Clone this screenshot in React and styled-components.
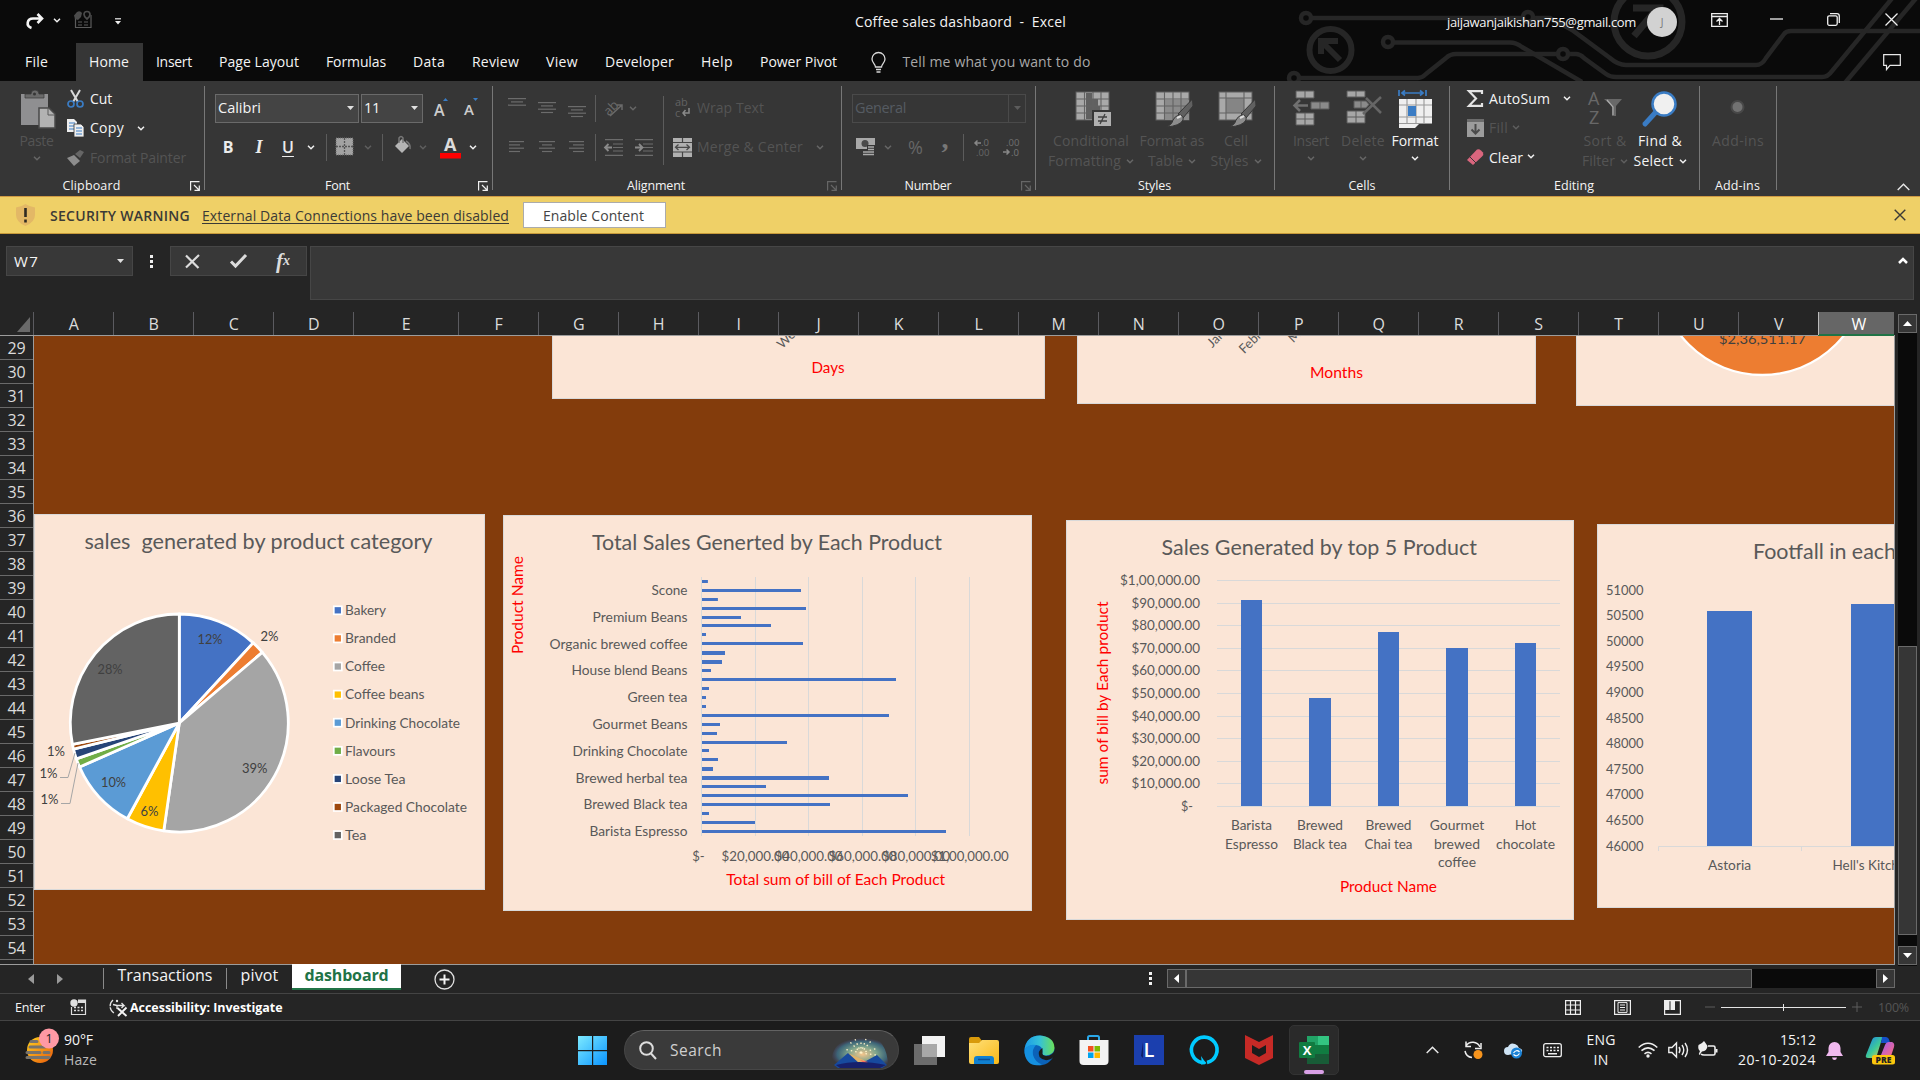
import React, { useLayoutEffect, useRef, useState } from "react";
import styled, { createGlobalStyle } from "styled-components";

const UI = `"Open Sans", "Noto Sans", sans-serif`;
const CH = `Lato, "Open Sans", sans-serif`;

const Global = createGlobalStyle`
  * { box-sizing: border-box; }
  html, body { margin: 0; padding: 0; overflow: hidden; background: #252525; }
  svg { display: block; flex: none; overflow: visible; }
`;

/* ---------- shared parts ---------- */

const Label = styled.span`
  display: inline-block;
  flex: none;
  white-space: pre;
  font-family: ${UI};
  font-size: ${(p) => p.$size}px;
  font-weight: ${(p) => p.$weight || 400};
  line-height: 20px;
  color: ${(p) => p.$color || "#f4f4f4"};
  text-decoration: ${(p) => (p.$under ? "underline" : "none")};
  text-underline-offset: 2px;
`;

/* A label whose tracking is adjusted so that it fills the given width. */
function Txt({ w, size = 14, color, weight, under, children }) {
  const ref = useRef(null);
  const [track, setTrack] = useState(0);
  useLayoutEffect(() => {
    if (!w) return;
    const natural = ref.current.getBoundingClientRect().width;
    setTrack((w - natural) / String(children).length);
  }, []);
  return (
    <Label ref={ref} $size={size} $color={color} $weight={weight} $under={under} style={track ? { letterSpacing: `${track}px` } : undefined}>
      {children}
    </Label>
  );
}

const Icon = ({ w, h, box, children }) => (
  <svg width={w} height={h} viewBox={box || `0 0 ${w} ${h}`} fill="none">
    {children}
  </svg>
);

const Chevron = ({ c = "#f0f0f0", w = 8 }) => (
  <Icon w={w} h={5} box="0 0 8 5">
    <path d="M1 .8 4 3.8 7 .8" stroke={c} strokeWidth="1.5" />
  </Icon>
);

const Box = styled.div`
  display: flex;
  flex: none;
  align-items: center;
  justify-content: ${(p) => p.$j || "flex-start"};
  width: ${(p) => (p.$w ? `${p.$w}px` : "auto")};
  margin-left: ${(p) => p.$ml || 0}px;
  margin-top: ${(p) => p.$mt || 0}px;
`;

const Dim = "#545454";

/* ---------- title and tabs ---------- */

const Window = styled.div`
  width: 1920px;
  height: 1080px;
  display: flex;
  flex-direction: column;
  overflow: hidden;
  background: #252525;
`;

const Header = styled.header`
  position: relative;
  height: 81px;
  flex: none;
  overflow: hidden;
  background: #0a0a0a;
`;
const Circuit = styled.div`
  position: absolute;
  right: 0;
  top: 0;
`;
const TitleBar = styled.div`
  position: relative;
  height: 43px;
  display: flex;
  align-items: center;
`;
const Tabs = styled.nav`
  position: relative;
  height: 38px;
  display: flex;
  align-items: center;
  padding-left: 11.5px;
`;
const Tab = styled.div`
  height: 38px;
  display: flex;
  align-items: center;
  padding: 0 13.5px;
  background: ${(p) => (p.$on ? "#363636" : "transparent")};
  margin-left: ${(p) => p.$ml || 0}px;
`;
const Avatar = styled.div`
  width: 30px;
  height: 30px;
  border-radius: 50%;
  background: #d2d2d2;
  margin-left: 11px;
  display: flex;
  align-items: center;
  justify-content: center;
`;

function CircuitArt() {
  const s = "#262626";
  return (
    <Circuit>
      <svg width="640" height="81" viewBox="1280 0 640 81" fill="none" stroke={s} strokeWidth="4.5">
        <circle cx="1306" cy="18" r="5" />
        <path d="M1312 18H1522M1534 18H1550L1572 30 1610 58Q1618 65 1626 65H1756Q1762 65 1766 58L1784 34Q1786 31 1791 31H1920" />
        <circle cx="1528" cy="17" r="5" />
        <circle cx="1648" cy="22" r="34" strokeWidth="7" />
        <circle cx="1330.500" cy="50" r="21" strokeWidth="6" />
        <path d="M1340 60 1322 42M1321 54V41H1338" strokeWidth="6" />
        <path d="M1634 36 1656 10M1633 8H1660V28" strokeWidth="7" />
        <circle cx="1388" cy="42" r="5" />
        <path d="M1394 42.500H1510Q1516 42.500 1522 47L1582 82" />
        <circle cx="1294" cy="78" r="5" />
        <path d="M1300 78H1418Q1422 78 1426 74L1446 58Q1450 54 1456 54H1557M1569 54H1576Q1580 54 1584 58L1606 74Q1610 77 1616 77H1822Q1828 77 1832 71L1894 -4" />
        <circle cx="1563" cy="54" r="5" />
        <path d="M1844 84 1918 -4" />
      </svg>
    </Circuit>
  );
}

const tabNames = [
  ["Insert", 36], ["Page Layout", 80], ["Formulas", 60], ["Data", 32], ["Review", 47],
  ["View", 32], ["Developer", 69], ["Help", 32], ["Power Pivot", 77],
];

function Top() {
  return (
    <Header>
      <CircuitArt />
      <TitleBar>
        <Box $ml={26} $mt={-1}>
          <Icon w={18} h={16}>
            <path d="M5.500 15C-.5 13 1 5.500 7 5.500H15M11.500 1 16 5.500 11.500 10" stroke="#f4f4f4" strokeWidth="2.600" />
          </Icon>
        </Box>
        <Box $ml={9} $mt={-2}><Chevron /></Box>
        <Box $ml={13} $mt={-3}>
          <Icon w={18} h={18}>
            <path d="M1.500 7V16.500H17V4M4 11h4M10 11h4M4 14h4M10 14h4" stroke="#5c5c5c" strokeWidth="1.200" />
            <path d="M0 4.500 3 1Q6-1 8 2L7 6 4 9 1 8z" fill="#4c4c4c" /><path d="M10 3.500Q10 .500 13 .500 16 .500 16 3.500 16 5.500 13 8 10 5.500 10 3.500z" stroke="#4c4c4c" strokeWidth="1.700" />
          </Icon>
        </Box>
        <Box $ml={23}>
          <Icon w={6} h={7}><path d="M0 .8h6" stroke="#eee" strokeWidth="1.200" /><path d="M0 3h6L3 6.500z" fill="#eee" /></Icon>
        </Box>
        <Box $ml={734}><Txt w={211} size={14}>Coffee sales dashbaord  -  Excel</Txt></Box>
        <Box $ml={381}><Txt w={189} size={13}>jaijawanjaikishan755@gmail.com</Txt></Box>
        <Avatar><Txt size={10} color="#777">J</Txt></Avatar>
        <Box $ml={34} $mt={-4}>
          <Icon w={17} h={14}><path d="M.7.700H16.300V13.300H.7zM.7 3.500H16.300M8.500 12V6M5.500 8.500 8.500 5.500 11.500 8.500" stroke="#eee" strokeWidth="1.300" /></Icon>
        </Box>
        <Box $ml={42} $mt={-5}><Icon w={13} h={2}><path d="M0 1h13" stroke="#f0f0f0" strokeWidth="1.300" /></Icon></Box>
        <Box $ml={44} $mt={-4}>
          <Icon w={13} h={13}><rect x=".7" y="2.800" width="9.500" height="9.500" rx="1.500" stroke="#f0f0f0" strokeWidth="1.300" /><path d="M3 .7H10Q12.300.700 12.300 3V10" stroke="#f0f0f0" strokeWidth="1.300" /></Icon>
        </Box>
        <Box $ml={45} $mt={-4}><Icon w={13} h={13}><path d="M.5.500 12.500 12.500M12.500.500.500 12.500" stroke="#f0f0f0" strokeWidth="1.300" /></Icon></Box>
      </TitleBar>
      <Tabs>
        <Tab><Txt w={23}>File</Txt></Tab>
        <Tab $on $ml={14}><Txt w={40}>Home</Txt></Tab>
        {tabNames.map(([n, w]) => <Tab key={n}><Txt w={w}>{n}</Txt></Tab>)}
        <Box $ml={20}>
          <Icon w={15} h={21}>
            <path d="M4.500 15C4.500 12 1 11 1 7a6.500 6.500 0 0 1 13 0c0 4-3.500 5-3.500 8zM5 17.500h5M5.500 20h4" stroke="#d8d8d8" strokeWidth="1.300" />
          </Icon>
        </Box>
        <Box $ml={17}><Txt w={188} color="#a8a8a8">Tell me what you want to do</Txt></Box>
        <Box $ml={792}>
          <Icon w={18} h={17}><path d="M.7.700H17.300V11.300H7L3.500 15.500V11.300H.7z" stroke="#e8e8e8" strokeWidth="1.200" /></Icon>
        </Box>
      </Tabs>
    </Header>
  );
}

/* ---------- ribbon ---------- */

const Ribbon = styled.section`
  height: 115px;
  flex: none;
  display: flex;
  background: #363636;
`;
const Group = styled.div`
  width: ${(p) => p.$w}px;
  height: 104px;
  margin-top: 5px;
  flex: none;
  display: flex;
  flex-direction: column;
  border-right: 1px solid #777;
`;
const GroupBody = styled.div`
  height: 89px;
  flex: none;
  display: flex;
`;
const GroupFoot = styled.div`
  height: 20px;
  display: flex;
  align-items: center;
  justify-content: space-between;
  padding: 0 4px 0 0;
  margin-top: 1px;
`;
const FootLabel = styled.div`
  flex: 1;
  display: flex;
  justify-content: center;
  padding-left: ${(p) => p.$pl || 0}px;
  padding-right: ${(p) => p.$pr || 0}px;
`;
const Stack = styled.div`
  display: flex;
  flex-direction: column;
  margin-top: ${(p) => p.$mt}px;
  width: ${(p) => (p.$w ? `${p.$w}px` : "auto")};
  margin-left: ${(p) => p.$ml || 0}px;
  flex: none;
`;
const Line = styled.div`
  display: flex;
  align-items: center;
  flex: none;
  height: ${(p) => p.$h}px;
`;
const Big = styled.div`
  display: flex;
  flex-direction: column;
  align-items: center;
  width: ${(p) => p.$w}px;
  margin-left: ${(p) => p.$ml || 0}px;
  flex: none;
`;
const BigIcon = styled.div`
  height: 45px;
  display: flex;
  align-items: center;
  padding-left: ${(p) => p.$pl || 0}px;
`;
const BigLine = styled.div`
  height: 20px;
  display: flex;
  align-items: center;
  gap: 5px;
`;
const Combo = styled.div`
  width: ${(p) => p.$w}px;
  height: 29px;
  margin-left: ${(p) => p.$ml || 0}px;
  border: 1px solid ${(p) => (p.$dim ? "#4a4a4a" : "#6a6a6a")};
  background: ${(p) => (p.$dim ? "#363636" : "#444")};
  display: flex;
  align-items: center;
  justify-content: space-between;
  padding: 0 4px 0 2px;
`;
const Rule = styled.div`
  width: 1px;
  height: ${(p) => p.$h || 27}px;
  margin-left: ${(p) => p.$ml}px;
  background: #5c5c5c;
  flex: none;
`;
const ComboButton = styled.div`
  height: 27px;
  width: 17px;
  margin-right: -4px;
  border-left: 1px solid #4a4a4a;
  display: flex;
  align-items: center;
  justify-content: center;
`;

const Down = ({ c = "#e0e0e0" }) => <Icon w={7} h={4}><path d="M0 0h7L3.500 4z" fill={c} /></Icon>;
const Launcher = ({ dim }) => (
  <Icon w={10} h={10}><path d="M.6 9.500V.6H9.500M4 4 9 9M9.300 4.500V9.300H4.500" stroke={dim ? "#666" : "#f0f0f0"} strokeWidth="1.200" /></Icon>
);
const Lines = ({ rows, w = 18, c = "#6c6c6c" }) => (
  <Icon w={w} h={rows.length * 3 + 1}>
    {rows.map(([a, b], i) => <path key={i} d={`M${a} ${i * 3.3 + 0.6}H${b}`} stroke={c} strokeWidth="1.200" />)}
  </Icon>
);
const Mono = styled.span`
  font: ${(p) => p.$f};
  color: ${(p) => p.$c || "#ececec"};
  line-height: 20px;
  text-decoration: ${(p) => (p.$u ? "underline" : "none")};
  text-underline-offset: 3px;
`;

function Foot({ w, children, launch, pl, pr }) {
  return (
    <GroupFoot>
      <FootLabel $pl={pl} $pr={pr}><Txt size={12.5} w={w}>{children}</Txt></FootLabel>
      {launch && <Launcher dim={launch === "dim"} />}
    </GroupFoot>
  );
}

const GridIcon = ({ kind }) => (
  <Icon w={38} h={38}>
    <rect x="1" y="2" width="33" height="28" fill="#a9a9a9" stroke="#5d5d5d" />
    {kind === "cond" && <path d="M11 3h6v26h-6zM17 9h6v7h-6zM17 16h8v7h-8z" fill="#606060" />}
    {kind === "table" && <path d="M9 10h25v20H9z" fill="#8b8b8b" />}
    {kind === "cell" && <path d="M8 8h18v15H8z" fill="#858585" />}
    <path d={kind === "cell" ? "M8 2V30M26 2V30M1 8H34M1 23H34" : "M9.500 2V30M18 2V30M26 2V30M1 9H34M1 16H34M1 23H34"} stroke="#636363" strokeWidth="1.100" />
    {kind === "cond" ? (
      <g><rect x="18" y="21" width="19" height="16" fill="#b0b0b0" stroke="#363636" strokeWidth="2" /><path d="M23 27h9M23 31h9M30 24l-5 10" stroke="#404040" strokeWidth="1.300" /></g>
    ) : (
      <g><path d="M37.500 9 38 16 28 28 23 24z" fill="#606060" stroke="#363636" /><path d="M24 25q5 0 4 5-3 6-17 7 6-2 7-7 2-4 6-5z" fill="#8c8c8c" stroke="#363636" /><path d="M22 28l4-2" stroke="#ddd" strokeWidth="2" /></g>
    )}
  </Icon>
);

function Ribbons() {
  return (
    <Ribbon>
      <Group $w={205}>
        <GroupBody>
          <Big $w={35} $ml={19}>
            <BigIcon $pl={3}>
              <Icon w={36} h={38}>
                <path d="M1 4h27v31H1z" fill="#8f8f91" /><path d="M5 8V4h6q0-4 4-4t4 4h5v4z" fill="#6a6a6a" stroke="#363636" strokeWidth=".7" /><circle cx="14.500" cy="4" r="1.500" fill="#363636" />
                <path d="M19 18h10l6 6v14H19z" fill="#b2b2b2" stroke="#4a4a4a" strokeWidth="1.500" /><path d="M28 18v7h7" stroke="#5a5a5a" />
              </Icon>
            </BigIcon>
            <BigLine><Txt w={34} color={Dim}>Paste</Txt></BigLine>
            <Box $mt={5}><Chevron c="#666" /></Box>
          </Big>
          <Stack $mt={-2} $ml={13}>
            <Line $h={29.5}>
              <Icon w={17} h={19}><path d="M4 1 11 13M13 1 6 13" stroke="#d8d8d8" strokeWidth="2" /><circle cx="4" cy="15" r="3" stroke="#3a7cc4" strokeWidth="1.700" /><circle cx="13" cy="15" r="3" stroke="#3a7cc4" strokeWidth="1.700" /></Icon>
              <Box $ml={6}><Txt w={22}>Cut</Txt></Box>
            </Line>
            <Line $h={29.5}>
              <Icon w={17} h={18}><path d="M0 0h7l3 3v10H0z" fill="#eee" /><path d="M2 4h6M2 7h6M2 10h5" stroke="#3a7cc4" /><path d="M7 5h7l3 3v10H7z" fill="#eee" stroke="#363636" strokeWidth=".8" /><path d="M9 9h6M9 12h6M9 15h6" stroke="#3a7cc4" /></Icon>
              <Box $ml={6} $w={34}><Txt w={34}>Copy</Txt></Box>
              <Box $ml={13}><Chevron /></Box>
            </Line>
            <Line $h={29.5}>
              <Icon w={17} h={16}><path d="M0 8 7 5l6 6-6 5z" fill="#8d8d8d" /><path d="M8 4 13 0l4 2-4 6z" fill="#666" /></Icon>
              <Box $ml={6}><Txt w={96} color={Dim}>Format Painter</Txt></Box>
            </Line>
          </Stack>
        </GroupBody>
        <Foot w={58} launch="on" pr={7}>Clipboard</Foot>
      </Group>

      <Group $w={288}>
        <GroupBody>
          <Stack $mt={2.5} $ml={10}>
            <Line $h={39}>
              <Combo $w={144}><Txt w={43} size={14.5}>Calibri</Txt><Down /></Combo>
              <Combo $w={62} $ml={2}><Txt w={16} size={14.5}>11</Txt><Down /></Combo>
              <Box $ml={11}><Icon w={15} h={20}><text x="0" y="17.500" fontFamily="Open Sans" fontSize="16" fontWeight="600" fill="#ccc">A</text><path d="M9 3 11.500 0 14 3z" fill="#3a7cc4" /></Icon></Box>
              <Box $ml={15}><Icon w={15} h={20}><text x="0" y="17" fontFamily="Open Sans" fontSize="15" fontWeight="600" fill="#ccc">A</text><path d="M9 0H14L11.500 3z" fill="#3a7cc4" /></Icon></Box>
            </Line>
            <Line $h={39}>
              <Box $w={12} $ml={7} $j="center"><Mono $f={`700 16px ${UI}`}>B</Mono></Box>
              <Box $w={12} $ml={19} $j="center"><Mono $f={`italic 700 18px "Liberation Serif", serif`}>I</Mono></Box>
              <Box $w={12} $ml={17} $j="center"><Mono $f={`600 16px ${UI}`} $u>U</Mono></Box>
              <Box $ml={13}><Chevron /></Box>
              <Rule $ml={11} />
              <Box $ml={9}><Icon w={18} h={18}><rect width="17" height="17" fill="#a2a2a2" stroke="#6a6a6a" strokeDasharray="1 1" /><path d="M8.500 0V17M0 8.500H17" stroke="#555" strokeWidth="1.300" strokeDasharray="2 1" /></Icon></Box>
              <Box $ml={10}><Chevron c="#5e5e5e" /></Box>
              <Rule $ml={10} />
              <Box $ml={11} $mt={-4}><Icon w={18} h={18}><path d="M1 10 8 3l7 7-7 7z" fill="#b5b5b5" /><path d="M5 7V2q2-3 4 0v5M12 5q5 3 4 8" stroke="#777" strokeWidth="1.500" /></Icon></Box>
              <Box $ml={7}><Chevron c="#5e5e5e" /></Box>
              <Box $ml={13} $mt={1}><Icon w={21} h={22}><text x="4" y="14" fontFamily="Open Sans" fontSize="18" fontWeight="700" fill="#dcdcdc">A</text><rect y="16" width="21" height="5.500" fill="#f00" /></Icon></Box>
              <Box $ml={8}><Chevron /></Box>
            </Line>
          </Stack>
        </GroupBody>
        <Foot w={25} launch="on" pr={8}>Font</Foot>
      </Group>

      <Group $w={349}>
        <GroupBody>
          <Stack $mt={2.5} $ml={15} $w={88}>
            <Line $h={39}>
              <Box $mt={-10}><Lines rows={[[0, 18], [3, 15], [0, 18]]} /></Box>
              <Box $ml={12}><Lines rows={[[0, 18], [3, 15], [0, 18], [3, 15]]} /></Box>
              <Box $ml={12} $mt={8}><Lines rows={[[0, 18], [3, 15], [0, 18], [3, 15]]} /></Box>
              <Rule $ml={9} />
            </Line>
            <Line $h={39}>
              <Box $ml={1}><Lines rows={[[0, 15], [0, 11], [0, 15], [0, 11]]} /></Box>
              <Box $ml={12}><Lines rows={[[0, 16], [3, 13], [0, 16], [3, 13]]} /></Box>
              <Box $ml={12}><Lines rows={[[0, 15], [4, 15], [0, 15], [4, 15]]} /></Box>
              <Rule $ml={8} />
            </Line>
          </Stack>
          <Stack $mt={2.5} $ml={9} $w={51}>
            <Line $h={39}>
              <Icon w={20} h={20}><text x="-1" y="13" transform="rotate(-45 8 10)" fontFamily="Open Sans" fontSize="13" fill="#6a6a6a">ab</text><path d="M5 18 17 7M12 7h5v5" stroke="#6a6a6a" strokeWidth="1.500" /></Icon>
              <Box $ml={4}><Chevron c="#666" /></Box>
            </Line>
            <Line $h={39}>
              {[0, 1].map((i) => (
                <Box key={i} $ml={i ? 12 : 0}>
                  <Icon w={18} h={17}><path d="M0 .7H18M8 5H18M8 8.500H18M8 12H18M0 16.300H18" stroke="#6c6c6c" strokeWidth="1.200" /><path d={i ? "M0 8.500H7M4 5 7.500 8.500 4 12" : "M0 8.500H7M3.500 5 0 8.500 3.500 12"} stroke="#8a8a8a" strokeWidth="1.800" /></Icon>
                </Box>
              ))}
            </Line>
          </Stack>
          <Box><Rule $ml={7} $h={69} /></Box>
          <Stack $mt={2.5} $ml={9}>
            <Line $h={39}>
              <Box $ml={1}><Icon w={18} h={20}><text x="1" y="8" fontFamily="Open Sans" fontSize="11" fill="#626262">ab</text><text x="1" y="19" fontFamily="Open Sans" fontSize="11" fill="#626262">c</text><path d="M15 10v5H9M11.500 12 9 15l2.500 3" stroke="#8a8a8a" strokeWidth="1.500" /></Icon></Box>
              <Box $ml={5}><Txt w={67} color={Dim}>Wrap Text</Txt></Box>
            </Line>
            <Line $h={39}>
              <Icon w={19} h={19}><rect width="19" height="19" fill="#b0b0b0" /><path d="M0 4.500H19M0 14H19M9.500 0V4M9.500 14V19" stroke="#444" strokeWidth="1.200" /><path d="M3 9.300H16M5.500 6.500 2.500 9.300 5.500 12M13.500 6.500 16.500 9.300 13.500 12" stroke="#4a4a4a" strokeWidth="1.300" /></Icon>
              <Box $ml={5} $w={106}><Txt w={106} color={Dim}>Merge & Center</Txt></Box>
              <Box $ml={13}><Chevron c="#666" /></Box>
            </Line>
          </Stack>
        </GroupBody>
        <Foot w={58} launch="dim" pr={8}>Alignment</Foot>
      </Group>

      <Group $w={194}>
        <GroupBody>
          <Stack $mt={2.5} $ml={10}>
            <Line $h={39}>
              <Combo $w={174} $dim><Txt w={51} size={14.5} color="#555b62">General</Txt><ComboButton><Down c="#5c5c5c" /></ComboButton></Combo>
            </Line>
            <Line $h={39}>
              <Box $ml={4}><Icon w={20} h={20}><path d="M0 1h19v11H0z" fill="#a8a8a8" /><circle cx="9" cy="6.500" r="3.500" fill="#4a4a4a" /><path d="M11 8h8v12H6v-7h5z" fill="#363636" /><path d="M12 10h6M12 12.500h6M12 15h6M7 15h5M7 17.500h11" stroke="#aaa" strokeWidth="1.400" /></Icon></Box>
              <Box $ml={8}><Chevron c="#666" /></Box>
              <Box $ml={15} $w={17} $j="center"><Mono $f={`400 18px ${UI}`} $c="#666">%</Mono></Box>
              <Box $ml={15} $w={12} $j="center" $mt={-16}><Mono $f={`700 28px "Liberation Serif", serif`} $c="#777">,</Mono></Box>
              <Rule $ml={12} />
              <Box $ml={10}><Icon w={17} h={19}><text x="7" y="8" fontFamily="Open Sans" fontSize="9.500" fill="#707070">.0</text><text x="2" y="18" fontFamily="Open Sans" fontSize="9.500" fill="#666">.00</text><path d="M7 5H1M3.500 2.500 1 5l2.500 2.500" stroke="#888" strokeWidth="1.500" /></Icon></Box>
              <Box $ml={12}><Icon w={17} h={19}><text x="3" y="8" fontFamily="Open Sans" fontSize="9.500" fill="#707070">.00</text><text x="8" y="18" fontFamily="Open Sans" fontSize="9.500" fill="#777">.0</text><path d="M0 14H6M3.500 11.500 6 14l-2.500 2.500" stroke="#888" strokeWidth="1.500" /></Icon></Box>
            </Line>
          </Stack>
        </GroupBody>
        <Foot w={47} launch="dim" pr={7}>Number</Foot>
      </Group>

      <Group $w={239}>
        <GroupBody>
          <Big $w={88} $ml={11}>
            <BigIcon $pl={5}><GridIcon kind="cond" /></BigIcon>
            <BigLine><Txt w={76} color={Dim}>Conditional</Txt></BigLine>
            <BigLine><Txt w={73} color={Dim}>Formatting</Txt><Chevron c="#666" /></BigLine>
          </Big>
          <Big $w={68} $ml={3}>
            <BigIcon $pl={3}><GridIcon kind="table" /></BigIcon>
            <BigLine><Txt w={65} color={Dim}>Format as</Txt></BigLine>
            <BigLine><Txt w={35} color={Dim}>Table</Txt><Chevron c="#666" /></BigLine>
          </Big>
          <Big $w={56} $ml={2}>
            <BigIcon $pl={1}><GridIcon kind="cell" /></BigIcon>
            <BigLine><Txt w={24} color={Dim}>Cell</Txt></BigLine>
            <BigLine><Txt w={38} color={Dim}>Styles</Txt><Chevron c="#666" /></BigLine>
          </Big>
        </GroupBody>
        <Foot w={33} pl={3}>Styles</Foot>
      </Group>

      <Group $w={175}>
        <GroupBody>
          <Big $w={44} $ml={14}>
            <BigIcon>
              <Icon w={37} h={37}><g fill="#a6a6a6" stroke="#5a5a5a"><path d="M3 1h18v7H3zM12 1V8M3 23h18v12H3zM12 23V35M3 29H21" /><path d="M18 12h18v7H18zM27 12V19" fill="#8a8a8a" /></g><path d="M15 15.500H2M7 10 1.500 15.500 7 21" stroke="#707070" strokeWidth="2.500" /></Icon>
            </BigIcon>
            <BigLine><Txt w={36} color={Dim}>Insert</Txt></BigLine>
            <Box $mt={5}><Chevron c="#666" /></Box>
          </Big>
          <Big $w={52} $ml={4}>
            <BigIcon $pl={2}>
              <Icon w={36} h={37}><g fill="#a6a6a6" stroke="#5a5a5a"><path d="M1 1h18v6H1zM10 1V7M1 21h18v12H1zM10 21V33M1 27H19" /><path d="M8 11h12l3 3.500-3 3.500H8zM15 11V18" fill="#8a8a8a" /></g><path d="M20 8 35 23M35 7 17 24" stroke="#666" strokeWidth="2.500" /></Icon>
            </BigIcon>
            <BigLine><Txt w={44} color={Dim}>Delete</Txt></BigLine>
            <Box $mt={5}><Chevron c="#666" /></Box>
          </Big>
          <Big $w={50} $ml={1}>
            <BigIcon>
              <Icon w={35} h={38}><path d="M1 0V6M28 0V6M4 3H25M7 .500 4 3 7 5.500M22 .500 25 3 22 5.500" stroke="#3a7cc4" strokeWidth="1.700" /><path d="M1 9h33v24H1zM1 34h20l-4 4H1z" fill="#efefef" /><path d="M9 9V33M18 9V33M26 9V33M1 15H34M1 27H34M1 33.500H34" stroke="#999" strokeWidth="1.100" /><path d="M10 16h8v10h-8z" fill="#3a7cc4" /></Icon>
            </BigIcon>
            <BigLine><Txt w={47}>Format</Txt></BigLine>
            <Box $mt={5}><Chevron /></Box>
          </Big>
        </GroupBody>
        <Foot w={27} pl={4}>Cells</Foot>
      </Group>

      <Group $w={250}>
        <GroupBody>
          <Stack $mt={-2} $ml={17} $w={112}>
            <Line $h={29.5}>
              <Icon w={17} h={17}><path d="M15 4V1.200H2L9 8.500 2 15.800H15V13" stroke="#e4e4e4" strokeWidth="2.200" /></Icon>
              <Box $ml={5} $w={61}><Txt w={61}>AutoSum</Txt></Box>
              <Box $ml={13}><Chevron /></Box>
            </Line>
            <Line $h={29.5}>
              <Icon w={17} h={18}><path d="M0 0h17v18H0z" fill="#9c9c9c" /><path d="M0 0h17v3H0z" fill="#6c6c6c" /><path d="M8.500 5V14M4.500 10.500 8.500 14.500 12.500 10.500" stroke="#4a4a4a" strokeWidth="2" /></Icon>
              <Box $ml={5} $w={19}><Txt w={19} color={Dim}>Fill</Txt></Box>
              <Box $ml={4} $mt={-2}><Chevron c="#5e5e5e" /></Box>
            </Line>
            <Line $h={29.5}>
              <Icon w={17} h={17}><path d="M0 11 10 0.500q2-1 4 1l2 2q1 2-1 4L6 16z" fill="#d9667e" /><path d="M3 8l6 6" stroke="#363636" /></Icon>
              <Box $ml={5} $w={34}><Txt w={34}>Clear</Txt></Box>
              <Box $ml={4} $mt={-2}><Chevron /></Box>
            </Line>
          </Stack>
          <Big $w={50} $ml={1}>
            <BigIcon>
              <Icon w={38} h={34}><text x="2" y="13" fontFamily="Open Sans" fontSize="18" fill="#686868">A</text><text x="3" y="32" fontFamily="Open Sans" fontSize="18" fill="#686868">Z</text><path d="M18 7h18l-6 7v10h-4V14z" fill="#686868" /><path d="M21 8 27 15V23" stroke="#aaa" strokeWidth="1.200" /></Icon>
            </BigIcon>
            <BigLine><Txt w={43} color={Dim}>Sort &</Txt></BigLine>
            <BigLine><Txt w={33} color={Dim}>Filter</Txt><Chevron c="#5e5e5e" /></BigLine>
          </Big>
          <Big $w={56} $ml={2}>
            <BigIcon>
              <Icon w={36} h={36}><path d="M13 22 3 33" stroke="#3a7cc4" strokeWidth="5" strokeLinecap="round" /><circle cx="22" cy="13" r="11.500" fill="#f0f0f0" stroke="#3a7cc4" strokeWidth="2.500" /></Icon>
            </BigIcon>
            <BigLine><Txt w={44}>Find &</Txt></BigLine>
            <BigLine><Txt w={40}>Select</Txt><Chevron /></BigLine>
          </Big>
        </GroupBody>
        <Foot w={40} pl={3}>Editing</Foot>
      </Group>

      <Group $w={77}>
        <GroupBody>
          <Big $w={76}>
            <BigIcon><Icon w={16} h={16}><circle cx="7.500" cy="6" r="7" fill="#484848" /><circle cx="7.500" cy="6" r="5" fill="#727272" /></Icon></BigIcon>
            <BigLine><Txt w={52} color={Dim}>Add-ins</Txt></BigLine>
          </Big>
        </GroupBody>
        <Foot w={45} pl={3}>Add-ins</Foot>
      </Group>
      <Box $ml={120} $mt={97}><Icon w={13} h={8}><path d="M.7 7 6.500 1.300 12.300 7" stroke="#e8e8e8" strokeWidth="1.400" /></Icon></Box>
    </Ribbon>
  );
}

/* ---------- warning and formula bars ---------- */

const Warning = styled.section`
  height: 38px;
  flex: none;
  display: flex;
  align-items: center;
  padding-left: 15px;
  background: #efd067;
  border-top: 1px solid #cf9a44;
  border-bottom: 1px solid #c79a3a;
`;
const Enable = styled.button`
  width: 143px;
  height: 26px;
  margin-left: 14px;
  padding: 1px 2px 0 0;
  border: 1px solid #ababab;
  background: #fff;
  display: flex;
  align-items: center;
  justify-content: center;
`;
const FormulaBar = styled.section`
  height: 78px;
  flex: none;
  display: flex;
  align-items: flex-start;
  padding: 12px 6px 0;
`;
const Field = styled.div`
  width: ${(p) => p.$w}px;
  height: ${(p) => p.$h || 30}px;
  margin-left: ${(p) => p.$ml || 0}px;
  padding: 0 ${(p) => (p.$pr === undefined ? 8 : p.$pr)}px 0 7px;
  display: flex;
  align-items: center;
  justify-content: space-between;
  background: #383838;
  border: 1px solid #464646;
`;
const Dots = styled.div`
  width: 3px;
  height: 13px;
  margin: ${(p) => p.$m};
  flex: none;
  background: repeating-linear-gradient(#f0f0f0 0 3px, transparent 3px 5px);
`;

function Bars() {
  const dark = "#3b3a36";
  return (
    <>
      <Warning>
        <Icon w={21} h={22}><path d="M10.500 0Q15 3 20 3.500V11q0 7-9.500 11Q1 18 1 11V3.500Q6 3 10.500 0z" fill="#e3b866" /><path d="M10.500 4v9M10.500 15.500v3" stroke="#2f2a22" strokeWidth="2.600" /></Icon>
        <Box $ml={14} $mt={1}><Txt w={140} weight={600} size={14} color={dark}>SECURITY WARNING</Txt></Box>
        <Box $ml={12} $mt={1}><Txt w={307} under color={dark}>External Data Connections have been disabled</Txt></Box>
        <Enable><Txt w={101} color="#444">Enable Content</Txt></Enable>
        <Box $ml={1228}><Icon w={12} h={12}><path d="M.7.700 11.300 11.300M11.300.700.700 11.300" stroke={dark} strokeWidth="1.400" /></Icon></Box>
      </Warning>
      <FormulaBar>
        <Field $w={127}><Txt w={25} size={15}>W7</Txt><Down /></Field>
        <Dots $m="9px 0 0 17px" />
        <Field $w={137} $ml={17} $pr={7}>
          <Box $ml={7}><Icon w={15} h={15}><path d="M1 1.500 13.500 14M14 1 1 13.500" stroke="#dcdcdc" strokeWidth="2.200" /></Icon></Box>
          <Box $ml={1}><Icon w={17} h={14}><path d="M1 7.500 5.500 12 16 1" stroke="#dcdcdc" strokeWidth="3" /></Icon></Box>
          <Box $w={23} $mt={-1}><Mono $f={`italic 700 21px "Liberation Serif", serif`} $c="#dcdcdc">f</Mono><Mono $f={`italic 700 14px "Liberation Serif", serif`} $c="#dcdcdc">x</Mono></Box>
        </Field>
        <Field $w={1604} $h={54} $ml={3} $pr={5}>
          <span />
          <Box $mt={-26}><Icon w={10} h={7}><path d="M1 6 5 2 9 6" stroke="#fff" strokeWidth="2.500" /></Icon></Box>
        </Field>
      </FormulaBar>
    </>
  );
}

/* ---------- sheet ---------- */

const SheetArea = styled.main`
  height: 653px;
  flex: none;
  display: flex;
`;
const SheetMain = styled.div`
  width: 1895px;
  display: flex;
  flex-direction: column;
`;
const ColHeads = styled.div`
  height: 24px;
  flex: none;
  display: flex;
  border-bottom: 1px solid #9c9c9c;
`;
const ColHead = styled.div`
  width: ${(p) => p.$w}px;
  flex: none;
  display: flex;
  align-items: center;
  justify-content: center;
  padding-left: ${(p) => (p.$on ? 5 : 0.5)}px;
  font: 400 16px/22px ${UI};
  color: ${(p) => (p.$on ? "#fff" : "#dcdcdc")};
  background: ${(p) => (p.$on ? "#666" : "transparent")};
  border-left: 1px solid ${(p) => (p.$on ? "#bbb" : "#5b5b60")};
  box-shadow: ${(p) => (p.$on ? "inset 0 -1px #217346, 0 1px #217346" : "none")};
`;
const Corner = styled.div`
  width: 33px;
  flex: none;
  display: flex;
  justify-content: flex-end;
  padding: 5px 3px 0 0;
`;
const Body = styled.div`
  height: 629px;
  display: flex;
  border-bottom: 1px solid #9c9c9c;
`;
const RowHeads = styled.div`
  width: 34px;
  flex: none;
  overflow: hidden;
  border-right: 1px solid #9c9c9c;
`;
const RowHead = styled.div`
  height: 24px;
  border-bottom: 1px solid #6a6a6a;
  font: 400 16px/24px ${UI};
  letter-spacing: -0.2px;
  color: #dcdcdc;
  text-align: center;
`;
const Canvas = styled.div`
  position: relative;
  width: 1861px;
  overflow: hidden;
  background: #833c0c;
  border-right: 1px solid #9c9c9c;
`;
const Panel = styled.div`
  position: absolute;
  left: ${(p) => p.$x - 34}px;
  top: ${(p) => p.$y - 336}px;
  width: ${(p) => p.$w}px;
  height: ${(p) => p.$h}px;
  overflow: hidden;
  background: #fbe5d6;
  box-shadow: inset 0 0 0 1px #d9d9d9;
`;

/* Every panel draws in sheet coordinates, so its view box starts at its own corner. */
function Chart({ x, y, w, h, children }) {
  return (
    <Panel $x={x} $y={y} $w={w} $h={h}>
      <svg width={w} height={h} viewBox={`${x} ${y} ${w} ${h}`} fontFamily={CH}>{children}</svg>
    </Panel>
  );
}

function C({ x, y, w, s = 12.7, a = "middle", f = "#595959", r, children }) {
  return (
    <text x={x} y={y + s * 0.355} fontSize={s} textAnchor={a} fill={f} textLength={w} lengthAdjust="spacingAndGlyphs"
      transform={r ? `rotate(${r} ${x} ${y})` : undefined} style={{ whiteSpace: "pre" }}>
      {children}
    </text>
  );
}

const slices = [
  ["Bakery", "#4472c4", 0, 42.7, 41], ["Branded", "#ed7d31", 42.7, 49.6, 51], ["Coffee", "#a5a5a5", 49.6, 188.2, 40],
  ["Coffee beans", "#ffc000", 188.2, 208.5, 79.5], ["Drinking Chocolate", "#5b9bd5", 208.5, 246.2, 115],
  ["Flavours", "#70ad47", 246.2, 250.8, 50.5], ["Loose Tea", "#264478", 250.8, 256.1, 60.5],
  ["Packaged Chocolate", "#9e480e", 256.1, 258.7, 122], ["Tea", "#636363", 258.7, 360, 21.5],
];
const polar = (deg, r) => {
  const t = (deg * Math.PI) / 180;
  return `${179.3 + r * Math.sin(t)} ${723 - r * Math.cos(t)}`;
};
const pieLabels = [
  ["12%", 210, 639.5, 25], ["2%", 269.5, 636.5, 18], ["28%", 110, 669.5, 25], ["39%", 254.700, 768.5, 25.5], ["10%", 113.5, 782.5, 25],
  ["6%", 149.5, 811.5, 18], ["1%", 56, 751.5, 18], ["1%", 48.5, 773.5, 18], ["1%", 49.5, 799.5, 18],
];

function PieChart() {
  return (
    <Chart x={34} y={514} w={451} h={376}>
      <C x={84.5} y={542} w={348} s={20.5} a="start">{"sales  generated by product category"}</C>
      {slices.map(([n, c, a, b]) => (
        <path key={n} d={`M179.300 723L${polar(a, 109)}A109 109 0 ${b - a > 180 ? 1 : 0} 1 ${polar(b, 109)}Z`} fill={c} stroke="#fff" strokeWidth="2.800" strokeLinejoin="round" />
      ))}
      <path d="M60 777.500H68L75 753M61 803.500H70L78 763" fill="none" stroke="#a6a6a6" />
      {pieLabels.map(([t, x, y, w], i) => <C key={i} x={x} y={y} w={w} s={13} f="#404040">{t}</C>)}
      {slices.map(([n, c, , , w], i) => (
        <g key={n}>
          <rect x="333.800" y={606.3 + i * 28.1} width="8" height="8" fill={c} stroke="#fff" strokeWidth="1.700" />
          <C x={345} y={610.6 + i * 28.1} w={w} a="start">{n}</C>
        </g>
      ))}
    </Chart>
  );
}

const barEnds = [707.9, 801, 717.9, 806, 741, 771, 706, 803, 725, 722, 711, 896, 709, 706, 706, 889, 720, 717, 787, 709, 718, 713, 829, 766, 908, 830, 709, 755, 946];
const barNames = [
  ["Scone", 36], ["Premium Beans", 95], ["Organic brewed coffee", 138], ["House blend Beans", 116], ["Green tea", 60],
  ["Gourmet Beans", 95], ["Drinking Chocolate", 115], ["Brewed herbal tea", 112], ["Brewed Black tea", 104], ["Barista Espresso", 98],
];

function ProductChart() {
  return (
    <Chart x={503} y={515} w={529} h={396}>
      <C x={592} y={542.5} w={350} s={20.5} a="start">Total Sales Generted by Each Product</C>
      <C x={518} y={605} w={98} s={14.5} f="#f00" r={-90}>Product Name</C>
      {[701.5, 755.5, 808.5, 862.5, 915.5, 969.5].map((x) => <path key={x} d={`M${x} 577V836`} stroke="#d9d9d9" />)}
      {barEnds.map((e, i) => <rect key={i} x="702" y={Math.round(579.8 + i * 8.93)} width={e - 702} height={[8, 9, 21, 22].includes(i) ? 4 : 3} fill="#4472c4" />)}
      {barNames.map(([n, w], i) => <C key={n} x={687.5} y={590.5 + i * 26.8} w={w} a="end">{n}</C>)}
      <C x={698.5} y={856} w={12.5}>$-</C>
      {[["$20,000.00", 755.5], ["$40,000.00", 808.6], ["$60,000.00", 862.6], ["$80,000.00", 916]].map(([t, x]) => <C key={t} x={x} y={856} w={68}>{t}</C>)}
      <C x={969.7} y={856} w={78}>$1,00,000.00</C>
      <C x={835.7} y={880} w={219} s={15} f="#f00">Total sum of bill of Each Product</C>
    </Chart>
  );
}

const topFive = [
  [1241, 1262, 600, [["Barista", 41], ["Espresso", 53]]],
  [1309, 1331, 698, [["Brewed", 46], ["Black tea", 54]]],
  [1378, 1399, 632, [["Brewed", 46], ["Chai tea", 48]]],
  [1446, 1468, 648, [["Gourmet", 54.5], ["brewed", 46], ["coffee", 38]]],
  [1515, 1536, 643, [["Hot", 21], ["chocolate", 59]]],
];

function TopChart() {
  return (
    <Chart x={1066} y={520} w={508} h={400}>
      <C x={1161.5} y={547.5} w={315.5} s={20.5} a="start">Sales Generated by top 5 Product</C>
      <C x={1102.5} y={693} w={183} s={14.5} f="#f00" r={-90}>sum of bill by Each product</C>
      {Array.from({ length: 11 }, (_, i) => {
        const y = Math.round(580 + i * 22.6);
        const t = i === 0 ? "$1,00,000.00" : i === 10 ? "$-" : `$${10 - i}0,000.00`;
        return (
          <g key={i}>
            <path d={`M1217 ${y + 0.5}H1560`} stroke="#d9d9d9" />
            <C x={i === 10 ? 1193 : 1200} y={y + 0.3} w={i === 0 ? 80 : i === 10 ? 12 : 68.5} a="end">{t}</C>
          </g>
        );
      })}
      {topFive.map(([a, b, top, names]) => (
        <g key={a}>
          <rect x={a} y={top} width={b - a} height={806 - top} fill="#4472c4" />
          {names.map(([t, w], i) => <C key={t} x={(a + b) / 2} y={825.7 + i * 18.5} w={w}>{t}</C>)}
        </g>
      ))}
      <C x={1388.5} y={886.5} w={97} s={15} f="#f00">Product Name</C>
    </Chart>
  );
}

function FootfallChart() {
  return (
    <Chart x={1597} y={524} w={480} h={384}>
      <C x={1753} y={552} s={20.5} a="start" w={277}>Footfall in each store location</C>
      {Array.from({ length: 11 }, (_, i) => <C key={i} x={1606} y={590 + i * 25.6} w={37.500} a="start">{51000 - i * 500}</C>)}
      <path d="M1658.500 851V846.500H2060M1801.500 846V851" fill="none" stroke="#d9d9d9" />
      <rect x="1707" y="611" width="45" height="235" fill="#4472c4" />
      <rect x="1851" y="604" width="45" height="242" fill="#4472c4" />
      <C x={1729.5} y={865.5} w={43}>Astoria</C>
      <C x={1832.5} y={865.5} a="start" w={81}>Hell's Kitchen</C>
    </Chart>
  );
}

const columns = "ABCDEFGHIJKLMNOPQRSTUVW".split("");

const VScroll = styled.div`
  width: 19px;
  height: 652px;
  margin: 2px 0 0 3px;
  display: flex;
  flex-direction: column;
  background: #0a0a0a;
`;
const ScrollButton = styled.div`
  width: 19px;
  height: 19px;
  flex: none;
  display: flex;
  align-items: center;
  justify-content: center;
  background: #363636;
  border: 1px solid #6a6a6a;
`;
const Thumb = styled.div`
  flex: none;
  width: ${(p) => p.$w}px;
  height: ${(p) => p.$h}px;
  margin: ${(p) => p.$m || 0};
  background: #363636;
  border: 1px solid #6a6a6a;
`;

function Sheet() {
  return (
    <SheetArea>
      <SheetMain>
        <ColHeads>
          <Corner><Icon w={13} h={15}><path d="M13 0V15H0z" fill="#6a6a6a" /></Icon></Corner>
          {columns.map((c) => <ColHead key={c} $w={c === "E" ? 105 : c === "W" ? 76 : 80} $on={c === "W"}>{c}</ColHead>)}
        </ColHeads>
        <Body>
          <RowHeads>{Array.from({ length: 27 }, (_, i) => <RowHead key={i}>{i + 29}</RowHead>)}</RowHeads>
          <Canvas>
            <Chart x={552} y={300} w={493} h={99}>
              <C x={779} y={346} s={13} a="start" r={-45}>Wednesday</C>
              <C x={828} y={367.5} w={33} s={15} f="#f00">Days</C>
            </Chart>
            <Chart x={1077} y={300} w={459} h={104}>
              <C x={1209} y={345} s={13} a="start" r={-45}>January</C>
              <C x={1241} y={351} s={13} a="start" r={-45}>February</C>
              <C x={1290} y={340} s={13} a="start" r={-45}>March</C>
              <C x={1336.5} y={373} w={53} s={15} f="#f00">Months</C>
            </Chart>
            <Chart x={1576} y={300} w={480} h={106}>
              <circle cx="1762.300" cy="271" r="104" fill="#ed7d31" stroke="#fff" strokeWidth="2.300" />
              <C x={1762.5} y={339.5} w={87} s={14} f="#404040">$2,36,511.17</C>
            </Chart>
            <PieChart />
            <ProductChart />
            <TopChart />
            <FootfallChart />
          </Canvas>
        </Body>
      </SheetMain>
      <VScroll>
        <ScrollButton><Icon w={9} h={5}><path d="M0 5 4.500 0 9 5z" fill="#fff" /></Icon></ScrollButton>
        <Thumb $w={19} $h={289} $m="313px 0 11px" />
        <ScrollButton><Icon w={9} h={5}><path d="M0 0H9L4.500 5z" fill="#fff" /></Icon></ScrollButton>
      </VScroll>
    </SheetArea>
  );
}

/* ---------- sheet tabs and status ---------- */

const TabStrip = styled.div`
  height: 29px;
  flex: none;
  display: flex;
  align-items: flex-start;
  border-bottom: 1px solid #444;
`;
const SheetTab = styled.div`
  width: ${(p) => p.$w}px;
  height: 21px;
  margin-top: 2.5px;
  flex: none;
  display: flex;
  align-items: flex-start;
  justify-content: center;
  border-left: 1px solid #8a8a8a;
`;
const ActiveTab = styled.div`
  width: 109px;
  height: 26px;
  flex: none;
  display: flex;
  justify-content: center;
  background: #fff;
  border-bottom: 2px solid #217346;
  padding-top: 1px;
`;
const HScroll = styled.div`
  height: 19px;
  width: 728px;
  margin: 4px 0 0 15px;
  display: flex;
  justify-content: space-between;
  background: #0a0a0a;
`;
const Status = styled.div`
  height: 27px;
  flex: none;
  display: flex;
  align-items: center;
  border-bottom: 1px solid #444;
`;
const Tri = ({ d, c, w = 6, h = 10 }) => <Icon w={w} h={h}><path d={d < 0 ? `M${w} 0V${h}L0 ${h / 2}z` : `M0 0V${h}L${w} ${h / 2}z`} fill={c} /></Icon>;

function Footer() {
  return (
    <>
      <TabStrip>
        <Box $ml={28} $mt={9}><Tri d={-1} c="#9a9a9a" /></Box>
        <Box $ml={23} $mt={9}><Tri d={1} c="#9a9a9a" /></Box>
        <Box $ml={40} />
        <SheetTab $w={123}><Box $mt={-3}><Txt size={16} w={95}>Transactions</Txt></Box></SheetTab>
        <SheetTab $w={66}><Box $mt={-3}><Txt size={16} w={38}>pivot</Txt></Box></SheetTab>
        <Box $mt={-1}><ActiveTab><Txt size={16} w={84} weight={700} color="#217346">dashboard</Txt></ActiveTab></Box>
        <Box $ml={33} $mt={4}>
          <Icon w={21} h={21}><circle cx="10.500" cy="10.500" r="9.500" stroke="#e0e0e0" strokeWidth="1.300" /><path d="M10.500 5.500V15.500M5.500 10.500H15.500" stroke="#f4f4f4" strokeWidth="2" /></Icon>
        </Box>
        <Dots $m="7px 0 0 694px" />
        <HScroll>
          <ScrollButton><Tri d={-1} c="#fff" w={5} h={9} /></ScrollButton>
          <Thumb $w={566} $h={19} $m="0 auto 0 0" />
          <ScrollButton><Tri d={1} c="#fff" w={5} h={9} /></ScrollButton>
        </HScroll>
      </TabStrip>
      <Status>
        <Box $ml={15} $w={30} $mt={1}><Txt size={12.5} w={30}>Enter</Txt></Box>
        <Box $ml={25}><Icon w={16} h={16}><circle cx="4" cy="4" r="3.700" fill="#e0e0e0" /><path d="M8 1h7.500v14.500H1.500V8" stroke="#ddd" strokeWidth="1.200" /><path d="M8 1h7v3H8z" fill="#ddd" /><path d="M4 8.500h2M7.500 8.500h2M11 8.500h2M4 11.500h2M7.500 11.500h2M11 11.500h2" stroke="#ddd" strokeWidth="1.300" /></Icon></Box>
        <Box $ml={22}>
          <Icon w={21} h={19}><path d="M5 2A8 8 0 0 0 6 15" stroke="#e4e4e4" strokeWidth="1.300" strokeDasharray="7 1" /><circle cx="9" cy="3" r="1.200" fill="#e4e4e4" /><path d="M5 6.500 9 7.500H16L13.500 5M16 7.500 13.500 10M9 7.500V11" stroke="#e4e4e4" strokeWidth="1.300" /><path d="M9.500 10 18.500 18M18.500 9.500 10 18" stroke="#f4f4f4" strokeWidth="1.900" /></Icon>
        </Box>
        <Box $ml={1} $w={152} $mt={1}><Txt size={12.5} w={152.5} weight={700} color="#fff">Accessibility: Investigate</Txt></Box>
        <Box $ml={1283}><Icon w={16} h={15}><path d="M.6.600H15.400V14.400H.6zM5.500.600V14.400M10.500.600V14.400M.6 5H15.400M.6 10H15.400" stroke="#eee" strokeWidth="1.200" /></Icon></Box>
        <Box $ml={33}><Icon w={17} h={15}><path d="M.6.600H16.400V14.400H.6z" stroke="#eee" strokeWidth="1.200" /><path d="M4 2.600H13V12.400H4zM6 5h5M6 7.500h5M6 10h5" stroke="#eee" /></Icon></Box>
        <Box $ml={33}><Icon w={17} h={15}><path d="M.6.600H16.400V14.400H.6z" stroke="#eee" strokeWidth="1.200" /><path d="M1 1h4.500v9H1zM6.500 1H11v9H6.500z" fill="#eee" /></Icon></Box>
        <Box $ml={24}><Icon w={10} h={2}><path d="M0 1h10" stroke="#5c5c5c" /></Icon></Box>
        <Box $ml={6}><Icon w={125} h={7}><path d="M0 3.500H125M62.500 0V7" stroke="#e4e4e4" /></Icon></Box>
        <Box $ml={6}><Icon w={10} h={10}><path d="M0 5h10M5 0v10" stroke="#5c5c5c" /></Icon></Box>
        <Box $ml={16} $mt={1}><Txt size={12.5} w={31} color="#555">100%</Txt></Box>
      </Status>
    </>
  );
}

/* ---------- taskbar ---------- */

const Taskbar = styled.footer`
  height: 59px;
  flex: none;
  display: flex;
  align-items: center;
  padding-bottom: 1px;
  background: #1c1c1c;
`;
const Search = styled.div`
  width: 275px;
  height: 40px;
  margin-left: 17px;
  border-radius: 20px;
  background: #3a3a3a;
  border: 1px solid #464646;
  border-top-color: #626262;
  display: flex;
  align-items: center;
  padding-left: 14px;
`;
const ActiveApp = styled.div`
  width: 50px;
  height: 50px;
  margin-left: 16px;
  border-radius: 5px;
  background: #2a2a2a;
  border: 1px solid #333;
  display: flex;
  flex-direction: column;
  align-items: center;
  padding-top: 9px;
  gap: 5px;
`;
const Marker = styled.div`
  width: 20px;
  height: 4px;
  border-radius: 2px;
  background: #d9a0e6;
`;
const Pair = styled.div`
  display: flex;
  flex-direction: column;
  align-items: ${(p) => p.$a};
  margin-left: ${(p) => p.$ml}px;
  width: ${(p) => p.$w}px;
  flex: none;
`;

function Task() {
  return (
    <Taskbar>
      <svg width="0" height="0">
        <defs>
          <linearGradient id="win" x1="0" y1="0" x2="1" y2="1"><stop stopColor="#7deaff" /><stop offset="1" stopColor="#0a94ff" /></linearGradient>
          <linearGradient id="haze" x1="0" y1="0" x2="1" y2="1"><stop stopColor="#ffd21e" /><stop offset="1" stopColor="#e8590c" /></linearGradient>
          <linearGradient id="fold" x1="0" y1="0" x2="1" y2="1"><stop stopColor="#ffe07a" /><stop offset="1" stopColor="#f9b917" /></linearGradient>
          <radialGradient id="sky" cx=".55" cy=".6" r=".55"><stop stopColor="#f5c58c" /><stop offset=".45" stopColor="#7fa58c" /><stop offset=".8" stopColor="#3d6f86" stopOpacity=".8" /><stop offset="1" stopColor="#4b4a80" stopOpacity="0" /></radialGradient>
          <linearGradient id="edgeA" x1="0" y1="0" x2="1" y2="0"><stop stopColor="#1b9ae8" /><stop offset=".5" stopColor="#35c1d8" /><stop offset="1" stopColor="#6be05a" /></linearGradient>
          <linearGradient id="cop" x1="0" y1="0" x2="1" y2="1"><stop stopColor="#1a7ff0" /><stop offset=".5" stopColor="#3cc89a" /><stop offset="1" stopColor="#ffd23a" /></linearGradient>
          <linearGradient id="cop2" x1="0" y1="0" x2="1" y2="1"><stop stopColor="#a05cf2" /><stop offset="1" stopColor="#ff6b7a" /></linearGradient>
        </defs>
      </svg>
      <Box $ml={25} $mt={-8}>
        <Icon w={35} h={36}>
          <circle cx="15" cy="22" r="13" fill="url(#haze)" />
          <path d="M6 13.500H12M5 19H20M2 24.500H15M19 24.500H24M2 29.500H24" stroke="#77736c" strokeWidth="3" strokeLinecap="round" />
          <circle cx="24" cy="10.500" r="10" fill="#ff99a4" />
          <text x="24" y="15" textAnchor="middle" fontFamily="Open Sans" fontSize="12.500" fill="#222">1</text>
        </Icon>
      </Box>
      <Pair $a="flex-start" $ml={4} $w={41}><Txt w={29} size={14}>90°F</Txt><Txt w={33} size={14} color="#b8b8b8">Haze</Txt></Pair>
      <Box $ml={473}><Icon w={29} h={29}><path d="M0 0H14V14H0zM15.200 0H29V14H15.200zM0 15.200H14V29H0zM15.200 15.200H29V29H15.200z" fill="url(#win)" /></Icon></Box>
      <Search>
        <Icon w={18} h={19}><circle cx="7.500" cy="7.500" r="6.300" stroke="#ddd" strokeWidth="2" /><path d="M12 12.500 17 18" stroke="#ddd" strokeWidth="2" /></Icon>
        <Box $ml={13} $w={51}><Txt w={52} size={15.5} color="#cfcfcf">Search</Txt></Box>
        <Box $ml={109} $mt={3}>
          <Icon w={58} h={32}>
            <path d="M1 30Q1 12 12 6T30 1Q46-1 52 8T58 30z" fill="url(#sky)" />
            <g stroke="#fff3c9" strokeWidth="1.300" strokeDasharray="1.500 3"><path d="M31 17 20 6M31 17V4M31 17 41 5M31 17 48 12M31 17 14 13M31 17 25 3M31 17 36 3M31 17 46 19" /></g>
            <path d="M4 29 18 17l10 6 8 2 11-6 10 10-5 3H8z" fill="#174a9e" /><path d="M18 17l12 11 6-3z" fill="#e0b36a" /><path d="M30 24l8 2-3 2z" fill="#ff6b5c" /><path d="M6 29q22-6 50 0l-6 3H10z" fill="#17206b" />
          </Icon>
        </Box>
      </Search>
      <Box $ml={15}><Icon w={31} h={29}><path d="M0 8h23v21H0z" fill="#6c6c6c" /><path d="M8 0h23v21H8z" fill="#f2f2f2" /><path d="M8 8h15v13H8z" fill="#a8a8a8" /></Icon></Box>
      <Box $ml={24}><Icon w={30} h={27}><path d="M0 2q0-2 2-2h8l3 4v6H0z" fill="#d99a0b" /><path d="M0 6h10l3-3h15q2 0 2 2v20q0 2-2 2H2q-2 0-2-2z" fill="url(#fold)" /><path d="M5 27v-5q0-3 3-3h14q3 0 3 3v5z" fill="#1080d0" /><path d="M9 22.500H21" stroke="#0a4f96" strokeWidth="1.500" /></Icon></Box>
      <Box $ml={25}>
        <Icon w={31} h={31}>
          <circle cx="15.500" cy="15.500" r="15" fill="#0b62b8" />
          <path d="M.5 15Q2 .500 16 .500 30 1.500 30.500 13 30 20 22 20.500 17.500 20.500 18.500 17 19 11 12 10 4 9.500.500 15z" fill="url(#edgeA)" />
          <path d="M.5 15Q4 9 12 10 8 14 9 20 11 27 18 29.500 3 33 .500 18z" fill="#1590e0" />
          <path d="M18.500 17Q17.500 20.500 22 21 28 21 31 15V21L27 24Q20 27 15.500 22 13 16 18.500 13z" fill="#1c1c1c" />
        </Icon>
      </Box>
      <Box $ml={24}><Icon w={30} h={30}><path d="M9 6V2.500Q9 1 10.500 1h8Q20 1 20 2.500V6" stroke="#2aa7e8" strokeWidth="2" /><path d="M.5 5h29v21q0 4-4 4H4.500q-4 0-4-4z" fill="#f3f3f3" /><path d="M9 11h5.500v5.500H9z" fill="#f25022" /><path d="M15.500 11H21v5.500h-5.500z" fill="#7fba00" /><path d="M9 17.500h5.500V23H9z" fill="#00a4ef" /><path d="M15.500 17.500H21V23h-5.500z" fill="#ffb900" /></Icon></Box>
      <Box $ml={25}><Icon w={30} h={30}><path d="M0 0H30V30H0z" fill="#1b3fae" /><path d="M9 7v16l-2-2" fill="#0c2067" /><text x="9.500" y="22" fontFamily="Open Sans" fontSize="20" fontWeight="600" fill="#fff">L</text></Icon></Box>
      <Box $ml={25}><Icon w={30} h={30}><path d="M13 27.500A12.800 12.800 0 1 1 18 27.400" stroke="#00caff" strokeWidth="3.600" /><path d="M12 21Q13 25 12 29.500 16 30 17.500 28 15 26 12 21z" fill="#00caff" /></Icon></Box>
      <Box $ml={26}><Icon w={28} h={30}><path d="M0 0 14 7 28 0V23L14 30 0 23z" fill="#c62a26" /><path d="M7 10 14 14 21 10V18L14 22 7 18z" fill="#1c1c1c" /></Icon></Box>
      <ActiveApp>
        <Icon w={30} h={30}><path d="M8 1h22v28H8z" fill="#21a366" /><path d="M19 1h11v9H19z" fill="#33c481" /><path d="M8 10h11v9H8z" fill="#107c41" /><path d="M8 19h22v10H8z" fill="#185c37" /><path d="M19 10h11v9H19z" fill="#107c41" /><rect y="7" width="16" height="16" rx="1" fill="#107c41" /><text x="8" y="20" textAnchor="middle" fontFamily="Open Sans" fontSize="13" fontWeight="700" fill="#fff">X</text></Icon>
        <Marker />
      </ActiveApp>
      <Box $ml={87}><Icon w={13} h={8}><path d="M.7 7 6.500 1.300 12.300 7" stroke="#e8e8e8" strokeWidth="1.500" /></Icon></Box>
      <Box $ml={24}><Icon w={20} h={20}><path d="M17 7A8 8 0 0 0 3 6M3 1.500V6.500H8M2 11A8 8 0 0 0 9 17.500" stroke="#eee" strokeWidth="1.500" /><path d="M12 8.500h6V3" stroke="#eee" strokeWidth="1.500" /><circle cx="15" cy="14.500" r="4.500" fill="#f7941d" /></Icon></Box>
      <Box $ml={20}><Icon w={20} h={18}><path d="M5 14q-4 0-4-4t4-4q2-5 7-3 3 1 4 4 4 1 3 4z" fill="#cfe4f5" /><circle cx="13.500" cy="12" r="5.500" fill="#1a82d6" /><path d="M10.500 12q3-4 6-1M16.500 12.500q-3 4-6 1" stroke="#fff" strokeWidth="1.200" /></Icon></Box>
      <Box $ml={20}><Icon w={19} h={15}><rect x=".7" y=".7" width="17.600" height="13" rx="2" stroke="#eee" strokeWidth="1.300" /><path d="M3.500 4.500h2M7 4.500h2M10.500 4.500h2M14 4.500h2M3.500 7.500h2M7 7.500h2M10.500 7.500h2M14 7.500h2M5 10.700H14" stroke="#eee" strokeWidth="1.400" /></Icon></Box>
      <Pair $a="center" $ml={23} $w={32}><Txt w={29} size={14}>ENG</Txt><Txt w={15} size={14}>IN</Txt></Pair>
      <Box $ml={21}><Icon w={20} h={16}><path d="M.7 5.500Q10-3 19.300 5.500M3.500 8.700Q10 3 16.500 8.700M6.500 11.800Q10 9 13.500 11.800" stroke="#eee" strokeWidth="1.600" /><circle cx="10" cy="14" r="1.700" fill="#eee" /></Icon></Box>
      <Box $ml={10}><Icon w={20} h={18}><path d="M.8 6.500H4L8.500 2V16L4 11.500H.8z" stroke="#eee" strokeWidth="1.400" /><path d="M11 6q2 3 0 6M14 4q3.500 5 0 10M17 2q5 7 0 14" stroke="#eee" strokeWidth="1.400" /></Icon></Box>
      <Box $ml={10}><Icon w={20} h={18}><path d="M10 5H15.500Q17 5 17 6.500V12.500Q17 14 15.500 14H6Q4 14 3 13" stroke="#eee" strokeWidth="1.600" /><path d="M17.500 8h2v3.500h-2z" fill="#eee" /><path d="M.5 4 4 2 6 0 7.500 2 9.500 5Q9 10 4 10.500L1.500 14 .8 13 2 10Q-.5 8 .5 4z" fill="#eee" /></Icon></Box>
      <Pair $a="flex-end" $ml={17} $w={81}><Txt w={36} size={14}>15:12</Txt><Txt w={78} size={14}>20-10-2024</Txt></Pair>
      <Box $ml={10} $mt={1}><Icon w={17} h={18}><path d="M8.500 0Q14 .500 14.500 6V10L17 14H0L2.500 10V6Q3 .500 8.500 0zM6 15.500h5q-.5 2.500-2.500 2.500T6 15.500z" fill="#f1b9f0" /></Icon></Box>
      <Box $ml={22}>
        <Icon w={31} h={29}>
          <path d="M1 19 7 4Q8 1 11 1h9q-3 1-4 5l-4 13q-1 3-4 3H3q-3 0-2-3z" fill="url(#cop)" /><path d="M17 1h4q3 0 4 6h-9z" fill="#1450c8" /><path d="M16 19 20 9q1-3 4-3h3q3 1 2 5l-3 9z" fill="url(#cop2)" />
          <rect x="7" y="19" width="23" height="9.500" rx="2.500" fill="#fcc70d" /><text x="18.500" y="27" textAnchor="middle" fontFamily="Open Sans" fontSize="8.500" fontWeight="800" fill="#222">PRE</text>
        </Icon>
      </Box>
    </Taskbar>
  );
}

export default function App() {
  return (
    <Window>
      <Global />
      <Top />
      <Ribbons />
      <Bars />
      <Sheet />
      <Footer />
      <Task />
    </Window>
  );
}
